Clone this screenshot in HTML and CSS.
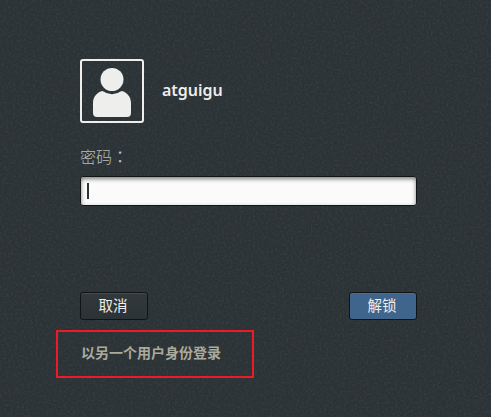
FILE: index.html
```html
<!DOCTYPE html>
<html lang="zh-CN">
<head>
<meta charset="utf-8">
<title>解锁</title>
<link rel="stylesheet" href="styles.css">
</head>
<body>
<svg class="texture" aria-hidden="true">
  <filter id="noise" x="0" y="0" width="100%" height="100%" color-interpolation-filters="sRGB">
    <feTurbulence type="fractalNoise" baseFrequency="0.45" numOctaves="2" seed="4"/>
    <feColorMatrix values="0 0 0 0 0.6  0 0 0 0 0.66  0 0 0 0 0.68  0.4 0 0 0 -0.17"/>
  </filter>
  <rect width="100%" height="100%" filter="url(#noise)"/>
</svg>
<main class="dialog">
  <header class="user">
    <div class="avatar">
      <svg width="60" height="60" viewBox="0 0 60 60" fill="#eeeeec">
        <circle cx="30" cy="18.500" r="11.500"/>
        <path d="M20.500 30Q30 36.500 39.500 30C45 31 49 36 49 42V52Q49 56 45 56H15Q11 56 11 52V42C11 36 15 31 20.500 30Z"/>
      </svg>
    </div>
    <span class="name">atguigu</span>
  </header>
  <label class="label" for="password">密码<span class="colon" lang="zh-TW">：</span></label>
  <div class="entry" id="password"><span class="caret"></span></div>
  <div class="actions">
    <button class="button">取消</button>
    <button class="button primary">解锁</button>
  </div>
  <div class="highlight"><a class="other">以另一个用户身份登录</a></div>
</main>
</body>
</html>
```
FILE: styles.css
```css
* { box-sizing: border-box; }
body {
  margin: 0;
  height: 417px;
  overflow: hidden;
  background: #2c3336;
  color: #eeeeec;
  font-family: "Noto Sans", "Noto Sans CJK SC", sans-serif;
}
.texture {
  position: absolute;
  inset: 0;
  width: 100%;
  height: 100%;
  opacity: 0.55;
}
.dialog {
  position: relative;
  display: flex;
  flex-direction: column;
  width: 337px;
  margin-left: 80px;
  padding-top: 59px;
}
.user {
  display: flex;
  align-items: center;
  gap: 18px;
  height: 64px;
}
.avatar {
  width: 64px;
  height: 64px;
  border: 2px solid #eeeeec;
  border-radius: 3px;
}
.avatar svg { display: block; }
.name {
  padding-bottom: 2px;
  font-size: 16px;
  font-weight: 600;
  line-height: 24px;
}
.label {
  height: 24px;
  margin-top: 21px;
  font: 300 16px/24px "Noto Sans CJK SC", sans-serif;
  color: #babdb6;
}
.colon { font-family: "Noto Sans CJK TC", sans-serif; font-weight: 400; }
.entry {
  height: 30px;
  margin-top: 8px;
  padding: 6px 6px;
  border: 1px solid #111617;
  border-radius: 3px;
  background: #fbfbfb;
  box-shadow: inset 0 2px 4px rgba(0, 0, 0, 0.5);
}
.caret {
  display: block;
  width: 2px;
  height: 16px;
  background: #2e3436;
}
.actions {
  display: flex;
  justify-content: space-between;
  margin-top: 86px;
}
.button {
  width: 68px;
  height: 28px;
  padding: 0 2px 3px 0;
  border: 1px solid #0f1415;
  border-radius: 3px;
  background: linear-gradient(#31393c, #2c3336);
  box-shadow: inset 0 1px #444c4f;
  color: #eeeeec;
  font: 14.5px/23px "Noto Sans CJK SC", sans-serif;
}
.primary {
  background: #3f658c;
  box-shadow: inset 0 1px #4b6f93;
}
.highlight {
  width: 198px;
  height: 48px;
  margin: 10px 0 0 -24px;
  padding: 9px 0 0 23px;
  border: 2px solid #ed1c24;
}
.other {
  display: block;
  font: bold 14px/23px "Noto Sans CJK SC", sans-serif;
  color: #aaaa9d;
  white-space: nowrap;
}
```
